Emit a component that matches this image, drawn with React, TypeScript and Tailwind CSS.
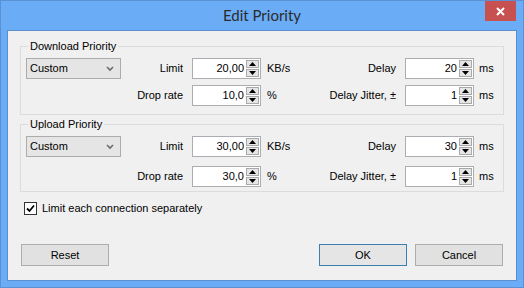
import React from "react";

function Spin() {
  return (
    <div className="flex h-full w-[14px] flex-col gap-[1px] py-[1px] pr-[1px]">
      <div className="flex flex-1 items-center justify-center border border-[#a9a9a9] bg-[#e6e6e6]">
        <svg width="7" height="4" viewBox="0 0 7 4">
          <path d="M3.5 0 L7 4 L0 4Z" fill="#000" />
        </svg>
      </div>
      <div className="flex flex-1 items-center justify-center border border-[#a9a9a9] bg-[#e6e6e6]">
        <svg width="7" height="4" viewBox="0 0 7 4">
          <path d="M0 0 L7 0 L3.5 4Z" fill="#000" />
        </svg>
      </div>
    </div>
  );
}

function NumInput({ value }: { value: string }) {
  return (
    <div className="flex h-[21px] w-[69px] items-stretch border border-[#abadb3] bg-white">
      <div className="flex flex-1 items-center justify-end pr-[2px] text-[11px] text-black">{value}</div>
      <Spin />
    </div>
  );
}

function Dropdown() {
  return (
    <div className="flex h-[21px] w-[95px] items-center justify-between border border-[#acacac] bg-[#e5e5e5] pl-[3px] pr-[6px] text-[11px] text-black">
      <span>Custom</span>
      <svg width="8" height="6" viewBox="0 0 8 6">
        <path d="M1 1 L4 4 L7 1" fill="none" stroke="#6d6d6d" strokeWidth="1.6" />
      </svg>
    </div>
  );
}

function Row({
  first,
  label,
  value,
  unit,
  label2,
  value2,
}: {
  first: boolean;
  label: string;
  value: string;
  unit: string;
  label2: string;
  value2: string;
}) {
  return (
    <div className="flex h-[21px] items-center pl-[5px] text-[11px] text-black">
      {first ? <Dropdown /> : <div className="w-[95px]" />}
      <div className="w-[62px] text-right">{label}</div>
      <div className="ml-[9px]">
        <NumInput value={value} />
      </div>
      <div className="ml-[6px] w-[40px]">{unit}</div>
      <div className="w-[89px] text-right">{label2}</div>
      <div className="ml-[9px]">
        <NumInput value={value2} />
      </div>
      <div className="ml-[5px]">ms</div>
    </div>
  );
}

function Group({
  title,
  limit,
  drop,
  delay,
  gap,
  pb,
}: {
  title: string;
  limit: string;
  drop: string;
  delay: string;
  gap: string;
  pb: string;
}) {
  return (
    <fieldset className={`mx-[12px] border border-[#dcdcdc] ${pb}`}>
      <legend className="ml-[7px] px-[2px] text-[11px] leading-[14px] text-black">{title}</legend>
      <div className={`mt-[5px] flex flex-col ${gap}`}>
        <Row first label="Limit" value={limit} unit="KB/s" label2="Delay" value2={delay} />
        <Row first={false} label="Drop rate" value={drop} unit="%" label2="Delay Jitter, ±" value2="1" />
      </div>
    </fieldset>
  );
}

function Btn({ children, primary }: { children: React.ReactNode; primary?: boolean }) {
  return (
    <div
      className={`flex h-[22px] w-[88px] items-center justify-center border text-[11px] text-black ${
        primary ? "border-[#3c7fb1] bg-[#e5e5e5]" : "border-[#adadad] bg-[#e1e1e1]"
      }`}
    >
      {children}
    </div>
  );
}

export default function App() {
  return (
    <div className="flex h-[288px] w-[524px] flex-col border border-[#5b90d4] bg-[#6aadf6] font-['Liberation_Sans',Arial,sans-serif]">
      <div className="relative flex h-[29px] shrink-0 items-center justify-center">
        <span className="font-['Lato',sans-serif] text-[15px] text-[#2b2b2b]">Edit Priority</span>
        <div className="absolute right-[7px] top-0 flex h-[20px] w-[31px] items-center justify-center bg-[#c75050]">
          <svg width="9" height="9" viewBox="0 0 9 9">
            <path d="M1 1 L8 8 M8 1 L1 8" stroke="#fff" strokeWidth="2" />
          </svg>
        </div>
      </div>
      <div className="mx-[6px] flex h-[251px] shrink-0 flex-col border border-[#5c8fd0] bg-[#f0f0f0]">
        <div className="mt-[8px]">
          <Group title="Download Priority" limit="20,00" drop="10,0" delay="20" gap="gap-[6px]" pb="pb-[8px]" />
        </div>
        <div className="mt-[2px]">
          <Group title="Upload Priority" limit="30,00" drop="30,0" delay="30" gap="gap-[9px]" pb="pb-[4px]" />
        </div>
        <div className="ml-[16px] mt-[8px] flex items-center gap-[5px] text-[11px] text-black">
          <div className="flex h-[13px] w-[13px] items-center justify-center border border-[#333] bg-white">
            <svg width="9" height="9" viewBox="0 0 9 9">
              <path d="M1 4.5 L3.5 7 L8 1.5" fill="none" stroke="#000" strokeWidth="1.8" />
            </svg>
          </div>
          <span>Limit each connection separately</span>
        </div>
        <div className="mt-auto mb-[14px] flex items-center px-[13px]">
          <Btn>Reset</Btn>
          <div className="flex-1" />
          <Btn primary>OK</Btn>
          <div className="ml-[8px]">
            <Btn>Cancel</Btn>
          </div>
        </div>
      </div>
    </div>
  );
}
